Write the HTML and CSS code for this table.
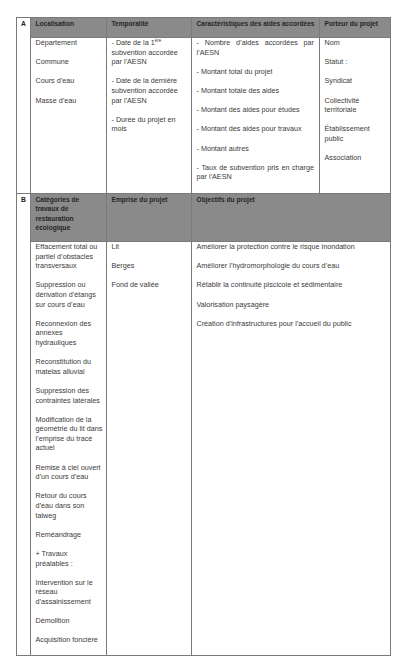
FILE: index.html
```html
<!DOCTYPE html>
<html lang="fr">
<head>
<meta charset="utf-8">
<title>Tableau</title>
<link rel="stylesheet" href="styles.css">
</head>
<body>
<table class="grid">
  <colgroup>
    <col class="c-lab">
    <col class="c-1">
    <col class="c-2">
    <col class="c-3">
    <col class="c-4">
  </colgroup>
  <tr class="r-ha">
    <td class="lab" rowspan="2">A</td>
    <th>Localisation</th>
    <th>Temporalité</th>
    <th>Caractéristiques des aides accordées</th>
    <th>Porteur du projet</th>
  </tr>
  <tr class="r-ba">
    <td>
      <p>Département</p>
      <p>Commune</p>
      <p>Cours d’eau</p>
      <p>Masse d’eau</p>
    </td>
    <td>
      <p>- Date de la 1<sup>ère</sup><br>subvention accordée<br>par l’AESN</p>
      <p>- Date de la dernière<br>subvention accordée<br>par l’AESN</p>
      <p>- Durée du projet en<br>mois</p>
    </td>
    <td class="just">
      <p><span class="jline">- Nombre d’aides accordées par</span>l’AESN</p>
      <p>- Montant total du projet</p>
      <p>- Montant totale des aides</p>
      <p>- Montant des aides pour études</p>
      <p>- Montant des aides pour travaux</p>
      <p>- Montant autres</p>
      <p><span class="jline">- Taux de subvention pris en charge</span>par l’AESN</p>
    </td>
    <td>
      <p>Nom</p>
      <p>Statut :</p>
      <p>Syndicat</p>
      <p>Collectivité<br>territoriale</p>
      <p>Établissement<br>public</p>
      <p>Association</p>
    </td>
  </tr>
  <tr class="r-hb">
    <td class="lab" rowspan="2">B</td>
    <th>Catégories de<br>travaux de<br>restauration<br>écologique</th>
    <th>Emprise du projet</th>
    <th colspan="2">Objectifs du projet</th>
  </tr>
  <tr class="r-bb">
    <td>
      <p>Effacement total ou<br>partiel d’obstacles<br>transversaux</p>
      <p>Suppression ou<br>dérivation d’étangs<br>sur cours d’eau</p>
      <p>Reconnexion des<br>annexes<br>hydrauliques</p>
      <p>Reconstitution du<br>matelas alluvial</p>
      <p>Suppression des<br>contraintes latérales</p>
      <p>Modification de la<br>géométrie du lit dans<br>l’emprise du tracé<br>actuel</p>
      <p>Remise à ciel ouvert<br>d’un cours d’eau</p>
      <p>Retour du cours<br>d’eau dans son<br>talweg</p>
      <p>Reméandrage</p>
      <p>+ Travaux<br>préalables :</p>
      <p>Intervention sur le<br>réseau<br>d’assainissement</p>
      <p>Démolition</p>
      <p>Acquisition foncière</p>
    </td>
    <td>
      <p>Lit</p>
      <p>Berges</p>
      <p>Fond de vallée</p>
    </td>
    <td colspan="2">
      <p>Améliorer la protection contre le risque inondation</p>
      <p>Améliorer l’hydromorphologie du cours d’eau</p>
      <p>Rétablir la continuité piscicole et sédimentaire</p>
      <p>Valorisation paysagère</p>
      <p>Création d’infrastructures pour l’accueil du public</p>
    </td>
  </tr>
</table>
</body>
</html>
```

FILE: styles.css
```css
html, body {
  margin: 0;
  padding: 0;
  background: #ffffff;
}

body {
  font-family: "Liberation Sans", Arial, sans-serif;
  font-size: 7.2px;
  line-height: 9.6px;
  color: #3a3a3a;
}

.grid {
  margin: 17px 0 0 16px;
  border-collapse: collapse;
  table-layout: fixed;
  width: 375px;
}

.c-lab { width: 14px; }
.c-1 { width: 76px; }
.c-2 { width: 85px; }
.c-3 { width: 128px; }
.c-4 { width: 71px; }

.grid td,
.grid th {
  border: 1px solid #7a7a7a;
  vertical-align: top;
  padding: 0 5px 0 4.5px;
  text-align: left;
  white-space: nowrap;
}

.grid th {
  background: #8a8a8a;
  color: #262626;
  font-weight: bold;
  font-size: 6.6px;
  padding-top: 0.5px;
}

.grid td.lab {
  font-weight: bold;
  font-size: 6.8px;
  color: #222222;
  padding: 0.5px 0 0 4px;
}

.r-ha { height: 20px; }
.r-ba { height: 156px; }
.r-hb { height: 48px; }
.r-bb { height: 413px; }

.grid p {
  margin: 0 0 9.6px 0;
}

.grid sup {
  font-size: 4.5px;
  line-height: 0;
  vertical-align: 3px;
}

.grid td.just {
  white-space: normal;
  text-align: justify;
}

.jline {
  display: block;
  text-align: justify;
  text-align-last: justify;
}
```
